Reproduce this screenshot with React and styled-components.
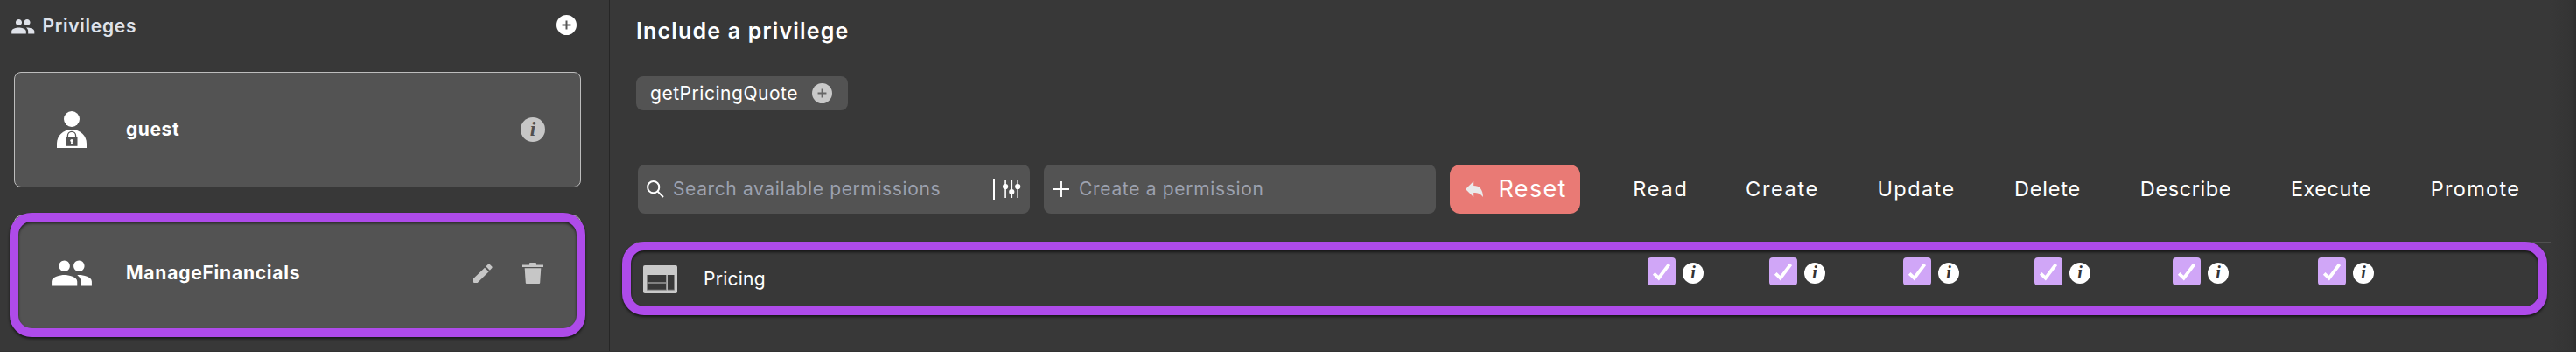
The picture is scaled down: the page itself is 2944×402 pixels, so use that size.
import React from "react";
import styled, { createGlobalStyle, css } from "styled-components";
import { MdPeople } from "react-icons/md";

const GlobalStyle = createGlobalStyle`
  * { box-sizing: border-box; }
  body {
    margin: 0;
    background: #383838;
    color: #fff;
    font-family: Inter, "Open Sans", sans-serif;
    font-size: 21px;
  }
`;

const Page = styled.div`
  display: flex;
  width: 2944px;
  height: 402px;
  overflow: hidden;
  background: linear-gradient(to right, #383838 2912px, #343434 2938px, #2f2f2f 2944px);
  border-bottom: 1px solid #323232;
`;

const Sidebar = styled.aside`
  width: 697px;
  flex: none;
  padding: 0 32px 0 16px;
  border-right: 1px solid #262626;
`;

const SidebarHeader = styled.header`
  display: flex;
  align-items: center;
  height: 58px;
  margin: 0 5px 24px -4px;
  color: #dfe2e9;
`;

const SidebarTitle = styled.h2`
  flex: 1;
  margin: 0 0 0 8px;
  font-size: 21px;
  font-weight: 600;
  letter-spacing: 0.74px;
`;

const HeaderIcon = styled(MdPeople)`
  width: 28.5px;
  height: 28.5px;
  margin-top: 2px;
`;

const RoundPlus = styled.span`
  display: flex;
  align-items: center;
  justify-content: center;
  width: 23px;
  height: 23px;
  border-radius: 50%;
  background: ${(p) => p.$bg};
  margin-top: ${(p) => p.$shift || "0"};
`;

const highlight = css`
  &::after {
    content: "";
    position: absolute;
    border: 10px solid #ae4bea;
    border-radius: 25px;
    filter: drop-shadow(0 2px 1.5px rgba(0, 0, 0, 0.6));
    pointer-events: none;
  }
`;

const PrivilegeCard = styled.article`
  position: relative;
  display: flex;
  align-items: center;
  height: 132px;
  padding: 0 40px 0 40px;
  border: 1px solid #bdbdbd;
  border-radius: 8px;
  background: #535353;
  & + & {
    margin-top: 32px;
  }
  ${(p) => p.$selected && highlight}
  &::after {
    inset: -4px -6.3px -8px -6px;
  }
`;

const CardIcon = styled.span`
  display: flex;
  justify-content: center;
  width: 50px;
  margin-right: 37px;
  & > svg {
    flex: none;
  }
`;

const CardName = styled.h3`
  flex: 1;
  margin: -2px 0 0;
  font-size: 21px;
  font-weight: 700;
  letter-spacing: ${(p) => p.$tracking};
`;

const CardActions = styled.span`
  display: flex;
  align-items: center;
  gap: 34px;
  & > svg:last-child {
    margin-right: 2px;
  }
`;

const InfoCircle = styled.span`
  display: inline-block;
  width: ${(p) => p.$size}px;
  height: ${(p) => p.$size}px;
  margin-top: ${(p) => p.$top || 0}px;
  border-radius: 50%;
  background: ${(p) => p.$bg};
  color: ${(p) => p.$ink};
  font: italic ${(p) => p.$weight} ${(p) => p.$size * 0.84}px/${(p) => p.$size - 1}px "Liberation Serif", serif;
  text-align: center;
`;

const Main = styled.main`
  width: 2216px;
  flex: none;
  padding: 0 0 0 30px;
`;

const SectionTitle = styled.h1`
  height: 70px;
  margin: 0 0 17px;
  font-size: 25px;
  line-height: 70px;
  font-weight: 600;
  letter-spacing: 1.17px;
`;

const Chip = styled.button`
  display: flex;
  align-items: center;
  gap: 16px;
  width: 242px;
  height: 39px;
  padding: 0 0 0 16px;
  border: 0;
  border-radius: 8px;
  background: #535353;
  color: #fff;
  font: 400 21px Inter, sans-serif;
  letter-spacing: 0.53px;
`;

const Toolbar = styled.div`
  display: flex;
  gap: 16px;
  height: 56px;
  margin: 62px 0 0 2px;
  & > * {
    flex: none;
  }
`;

const Field = styled.div`
  display: flex;
  align-items: center;
  width: 448px;
  padding: 0 10px;
  border-radius: 8px;
  background: #535353;
`;

const Placeholder = styled.span`
  flex: 1;
  margin: -2px 0 0 10px;
  color: #9ca1af;
  letter-spacing: ${(p) => p.$tracking};
`;

const FieldDivider = styled.span`
  width: 2px;
  height: 24px;
  margin-right: 9px;
  background: #fff;
`;

const ResetButton = styled.button`
  display: flex;
  align-items: center;
  gap: 17.5px;
  width: 149px;
  padding: 0 0 1px 18px;
  border: 0;
  border-radius: 12px;
  background: #e97a75;
  color: #fff;
  font: 400 27px Inter, sans-serif;
  letter-spacing: 1.35px;
`;

const Columns = styled.div`
  display: grid;
  grid-template-columns: 128px 150px 156px 144px 172px 160px 170px;
`;

const ColumnHeads = styled(Columns)`
  margin-left: 12px;
  align-items: center;
`;

const ColumnHead = styled.span`
  margin-top: -2px;
  font-size: 23.5px;
  text-align: center;
  letter-spacing: ${(p) => p.$tracking}px;
`;

const PermissionRow = styled.div`
  position: relative;
  display: flex;
  width: 2188px;
  height: 84px;
  margin-top: 32px;
  border-top: 1px solid #505050;
  ${highlight}
  &::after {
    inset: -1px 4.5px 0 -16px;
  }
`;

const PermissionName = styled.div`
  display: flex;
  align-items: center;
  width: 1107px;
  padding-left: 8px;
  gap: 30px;
  letter-spacing: 0.25px;
`;

const PermissionCell = styled.div`
  display: flex;
  align-items: flex-start;
  justify-content: center;
  gap: 8px;
  padding: 17px 0 0 34px;
`;

const Checkbox = styled.span`
  display: block;
  width: 32px;
  height: 32px;
  border-radius: 4px;
  background: #d0a6f7;
`;

const Plus = ({ size, stroke, color }) => (
  <svg width={size} height={size} viewBox="0 0 20 20" fill="none" stroke={color} strokeWidth={stroke}>
    <path d="M10 1V19M1 10H19" />
  </svg>
);

const GuestIcon = () => (
  <svg width="34" height="42" viewBox="0 0 34 42">
    <circle cx="17" cy="9" r="9" fill="#fff" />
    <path d="M0 42V37C0 28 7 21 17 21S34 28 34 37V42Z" fill="#fff" />
    <path d="M12.4 29.5V28a4.6 4.6 0 0 1 9.2 0v1.5" fill="none" stroke="#535353" strokeWidth="1.3" />
    <rect x="10.7" y="29" width="12.8" height="10.8" fill="#535353" />
    <circle cx="17" cy="33.6" r="1.7" fill="#fff" />
    <path d="M16.4 34h1.2l.4 3h-2Z" fill="#fff" />
  </svg>
);

const PencilIcon = () => (
  <svg width="22" height="22" viewBox="0 0 22 22" fill="#c6c6c6">
    <path d="M0 21V17.3L13 4.7 17.7 9.3 4.7 22H1Q0 22 0 21Z" />
    <path d="M14.4 3.3 17 .7Q17.8 0 18.6.7L21.4 3.5Q22 4.3 21.4 5.1L18.8 7.8Z" />
  </svg>
);

const TrashIcon = () => (
  <svg width="24" height="24" viewBox="0 0 24 24" fill="#c6c6c6">
    <path d="M0 2.6H8V1Q8 0 9 0H15Q16 0 16 1V2.6H24V5H0Z" />
    <path d="M2.7 6.2H21.3L20.2 23Q20.1 24 19.2 24H4.8Q3.9 24 3.8 23Z" />
  </svg>
);

const SearchIcon = () => (
  <svg width="20" height="20" viewBox="0 0 20 20" fill="none" stroke="#fff" strokeWidth="2">
    <circle cx="7.7" cy="7.7" r="6.6" />
    <path d="M12.4 12.4 19 19" />
  </svg>
);

const SlidersIcon = () => (
  <svg width="21" height="20" viewBox="0 0 21 20" fill="#fff">
    <path d="M2.3 0h1.6v20H2.3ZM9.5 0h1.6v20H9.5ZM16.4 0H18v20h-1.6Z" />
    <circle cx="3.1" cy="7" r="3.1" />
    <circle cx="10.3" cy="13" r="3.1" />
    <circle cx="17.2" cy="7" r="3.1" />
  </svg>
);

const ReplyIcon = () => (
  <svg width="20" height="18" viewBox="0 0 20 18" fill="#eaeaea">
    <path d="M0 9 9.2 0V5C16 5 20 9.5 20 18C17 14.2 14 13 9.2 13V18Z" />
  </svg>
);

const LayoutIcon = () => (
  <svg width="39" height="32" viewBox="0 0 39 32">
    <rect width="39" height="32" rx="2" fill="#c9c9c9" />
    <path d="M4.5 11H26.5V28.5H4.5ZM28 11H35.5V28.5H28Z" fill="#383838" />
    <path d="M4.5 20H26M26.9 11V28.5M4.5 28.4H26M28 28.4H35" stroke="#999" strokeWidth="1.3" />
  </svg>
);

const CheckIcon = () => (
  <svg width="32" height="32" viewBox="0 0 32 32" fill="none" stroke="#fff" strokeWidth="3.8">
    <path d="M7.2 18.4 12.7 23.6 24.6 7.9" />
  </svg>
);

const columns = [
  { label: "Read", tracking: 1.77, granted: true },
  { label: "Create", tracking: 1.66, granted: true },
  { label: "Update", tracking: 1.42, granted: true },
  { label: "Delete", tracking: 0.8, granted: true },
  { label: "Describe", tracking: 0.6, granted: true },
  { label: "Execute", tracking: 0.5, granted: true },
  { label: "Promote", tracking: 1.3, granted: false },
];

export default function App() {
  return (
    <Page>
      <GlobalStyle />
      <Sidebar>
        <SidebarHeader>
          <HeaderIcon />
          <SidebarTitle>Privileges</SidebarTitle>
          <RoundPlus $bg="#fff" $shift="-2px">
            <Plus size={11} stroke={3.6} color="#555" />
          </RoundPlus>
        </SidebarHeader>
        <PrivilegeCard>
          <CardIcon><GuestIcon /></CardIcon>
          <CardName $tracking="0.58px">guest</CardName>
          <CardActions>
            <InfoCircle $size={28} $bg="#c6c6c6" $ink="#505050" $weight={700}>i</InfoCircle>
          </CardActions>
        </PrivilegeCard>
        <PrivilegeCard $selected>
          <CardIcon><MdPeople size={50} /></CardIcon>
          <CardName $tracking="0.78px">ManageFinancials</CardName>
          <CardActions>
            <PencilIcon />
            <TrashIcon />
          </CardActions>
        </PrivilegeCard>
      </Sidebar>
      <Main>
        <SectionTitle>Include a privilege</SectionTitle>
        <Chip>
          getPricingQuote
          <RoundPlus $bg="#c9c9c9" $shift="-1px">
            <Plus size={11} stroke={3.2} color="#666" />
          </RoundPlus>
        </Chip>
        <Toolbar>
          <Field>
            <SearchIcon />
            <Placeholder $tracking="0.62px">Search available permissions</Placeholder>
            <FieldDivider />
            <SlidersIcon />
          </Field>
          <Field>
            <Plus size={20} stroke={1.9} color="#fff" />
            <Placeholder $tracking="0.68px">Create a permission</Placeholder>
          </Field>
          <ResetButton>
            <ReplyIcon />
            Reset
          </ResetButton>
          <ColumnHeads>
            {columns.map((c) => (
              <ColumnHead key={c.label} $tracking={c.tracking}>{c.label}</ColumnHead>
            ))}
          </ColumnHeads>
        </Toolbar>
        <PermissionRow>
          <PermissionName>
            <LayoutIcon />
            Pricing
          </PermissionName>
          <Columns>
            {columns.map((c) => (
              <PermissionCell key={c.label}>
                {c.granted && (
                  <>
                    <Checkbox><CheckIcon /></Checkbox>
                    <InfoCircle $size={24} $top={6} $bg="#fff" $ink="#333" $weight={700}>i</InfoCircle>
                  </>
                )}
              </PermissionCell>
            ))}
          </Columns>
        </PermissionRow>
      </Main>
    </Page>
  );
}
